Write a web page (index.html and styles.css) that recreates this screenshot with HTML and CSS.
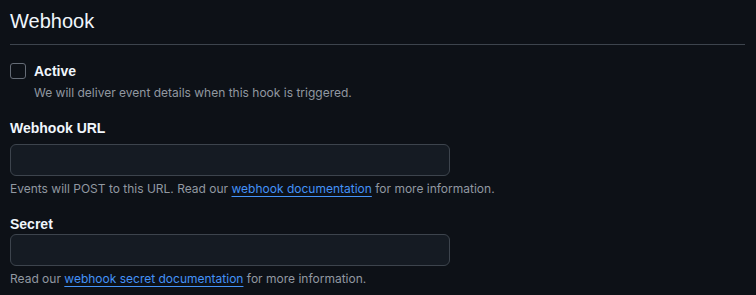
FILE: index.html
```html
<!DOCTYPE html>
<html lang="en">
<head>
<meta charset="utf-8">
<title>Webhook</title>
<link rel="stylesheet" href="styles.css">
</head>
<body>
<div class="page">
  <h2 class="subhead">Webhook</h2>
  <div class="check-row">
    <span class="checkbox"></span>
    <div class="check-text">
      <div class="check-label">Active</div>
      <div class="check-note">We will deliver event details when this hook is triggered.</div>
    </div>
  </div>
  <div class="group group-url">
    <div class="label label-url">Webhook URL</div>
    <div class="input"></div>
    <div class="note">Events will POST to this URL. Read our <a class="link" href="#">webhook documentation</a> for more information.</div>
  </div>
  <div class="group group-secret">
    <div class="label label-secret">Secret</div>
    <div class="input"></div>
    <div class="note">Read our <a class="link" href="#">webhook secret documentation</a> for more information.</div>
  </div>
</div>
</body>
</html>
```

FILE: styles.css
```css
html, body {
  margin: 0;
  padding: 0;
  background: #0d1117;
}
body {
  font-family: "Liberation Sans", Arial, sans-serif;
  color: #f0f6fc;
  width: 756px;
  height: 295px;
  overflow: hidden;
}
.page {
  padding: 0 11px 0 10px;
}
.subhead {
  margin: 0;
  padding: 6px 0 8px;
  font-size: 20px;
  line-height: 30px;
  font-weight: 400;
  color: #f0f6fc;
  border-bottom: 1px solid #3d444d;
}
.check-row {
  display: flex;
  gap: 8px;
  margin-top: 16px;
}
.checkbox {
  flex: none;
  width: 14px;
  height: 14px;
  margin-top: 2px;
  border: 1px solid #656c76;
  border-radius: 3px;
  background: #0d1117;
}
.check-label {
  font-size: 14px;
  line-height: 21px;
  font-weight: 700;
}
.check-note {
  margin-top: 2px;
  font-family: Inter, "Liberation Sans", sans-serif;
  font-size: 12px;
  line-height: 18px;
  color: #9198a1;
}
.group-url {
  margin-top: 16px;
}
.group-secret {
  margin-top: 16px;
}
.label {
  font-size: 14px;
  line-height: 20px;
  font-weight: 700;
}
.label-url {
  margin-bottom: 6px;
}
.label-secret {
  margin-bottom: 0;
}
.input {
  width: 438px;
  height: 30px;
  border: 1px solid #3d444d;
  border-radius: 6px;
  background: #151b23;
}
.note {
  margin-top: 4px;
  font-family: Inter, "Liberation Sans", sans-serif;
  font-size: 12px;
  line-height: 18px;
  color: #9198a1;
}
.link {
  color: #4493f8;
  text-decoration: underline;
  text-underline-offset: 3px;
}
```
